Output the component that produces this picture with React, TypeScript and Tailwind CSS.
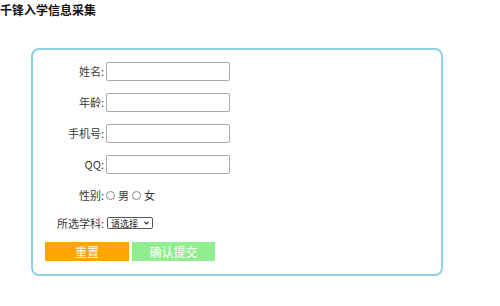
import React from "react";

const fields = [
  { label: "姓名:", name: "name" },
  { label: "年龄:", name: "age" },
  { label: "手机号:", name: "phone" },
  { label: "QQ:", name: "qq" },
];

const App = () => {
  return (
    <div
      className="w-[500px] h-[306px] bg-white text-[#3a3a3a] overflow-hidden"
      style={{ fontFamily: '"Noto Sans CJK SC", "Liberation Sans", sans-serif' }}
    >
      <h3 className="text-[12px] leading-[17px] pt-[1px] font-bold text-[#111]">千锋入学信息采集</h3>

      <form
        className="ml-[31px] mt-[30px] w-[412px] h-[228px] border-2 border-[#8fd0e8] rounded-[8px] pt-[12px]"
        onSubmit={(e) => e.preventDefault()}
      >
        {fields.map((f) => (
          <div key={f.name} className="flex items-center h-[19px] mb-[12px]">
            <label htmlFor={f.name} className="w-[71px] text-right text-[11px] leading-none">
              {f.label}
            </label>
            <input
              id={f.name}
              name={f.name}
              type="text"
              className="ml-[2px] w-[124px] h-[19px] border border-[#a9a9a9] rounded-[2px] bg-white outline-none"
            />
          </div>
        ))}

        <div className="flex items-center h-[18px] text-[11px] leading-none">
          <span className="w-[71px] text-right">性别:</span>
          <label className="flex items-center ml-[2px]">
            <input
              type="radio"
              name="sex"
              className="appearance-none w-[9px] h-[9px] rounded-full border border-[#888] bg-white m-0"
            />
            <span className="ml-[3px]">男</span>
          </label>
          <label className="flex items-center ml-[3px]">
            <input
              type="radio"
              name="sex"
              className="appearance-none w-[9px] h-[9px] rounded-full border border-[#888] bg-white m-0"
            />
            <span className="ml-[3px]">女</span>
          </label>
        </div>

        <div className="flex items-center h-[12px] mt-[13px] text-[11px] leading-none">
          <span className="w-[71px] text-right">所选学科:</span>
          <div className="relative ml-[3px]">
            <select className="appearance-none w-[46px] h-[12px] border border-[#555] rounded-[2px] bg-white text-[9px] leading-none pl-[3px] text-[#222] outline-none">
              <option>请选择</option>
              <option>HTML5</option>
              <option>Java</option>
              <option>Python</option>
            </select>
            <svg
              viewBox="0 0 10 10"
              className="absolute right-[3px] top-[3px] w-[7px] h-[6px] pointer-events-none"
            >
              <path d="M1.5 3 L5 6.5 L8.5 3" fill="none" stroke="#222" strokeWidth="1.8" />
            </svg>
          </div>
        </div>

        <div className="flex gap-[3px] ml-[12px] mt-[13px]">
          <button
            type="reset"
            className="w-[84px] h-[19px] bg-[#ffa500] text-[#fff8e0] text-[12px] leading-none"
          >
            重置
          </button>
          <button
            type="submit"
            className="w-[83px] h-[19px] bg-[#90ee90] text-white text-[12px] leading-none"
          >
            确认提交
          </button>
        </div>
      </form>
    </div>
  );
};

export default App;
